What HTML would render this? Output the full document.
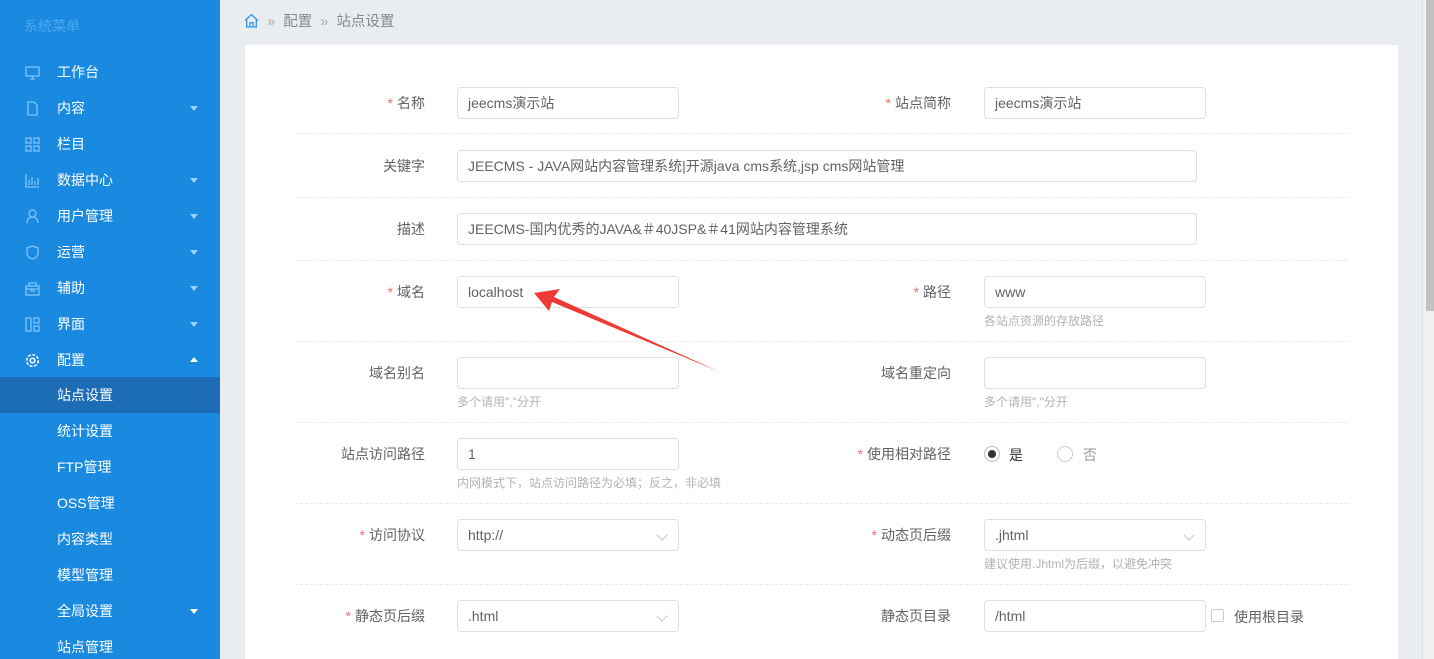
<!DOCTYPE html>
<html style="width:1434px;height:659px;overflow:hidden"><head><meta charset="utf-8">
<style>
*{box-sizing:border-box;margin:0;padding:0}
body{width:1434px;height:659px;overflow:hidden;background:#e9edf2;font-family:"Liberation Sans","Noto Sans CJK SC",sans-serif;font-size:14px;color:#606266;position:relative}
.side{position:absolute;left:0;top:0;width:220px;height:659px;background:#1a8ae0}
.side .t{position:absolute;left:24px;top:16px;color:#4aa8f0;font-size:14px}
.mi{position:absolute;left:0;width:220px;height:36px;line-height:36px;color:#fff;font-size:14px}
.mi .ic{position:absolute;left:25px;top:11px;width:15px;height:15px}
.mi .tx{position:absolute;left:57px}
.mi .ar{position:absolute;left:190px;top:16px;width:0;height:0;border-left:4px solid transparent;border-right:4px solid transparent;border-top:5px solid #9fd0f7}
.mi .up{border-top:none;border-bottom:5px solid #fff;top:15px}
.act{background:#1c6db5}
.bc{position:absolute;left:244px;top:10px;color:#888;font-size:14.5px}
.card{position:absolute;left:245px;top:45px;width:1153px;height:614px;background:#fff}
.gut{position:absolute;left:1398px;top:0;width:24px;height:659px;background:#e9edf2}
.sb{position:absolute;left:1422px;top:0;width:12px;height:659px;background:#f0f0f0;border-left:1px solid #e0e0e0}
.sb div{position:absolute;left:3px;top:0;width:9px;height:311px;background:#c1c1c1}
.hr{position:absolute;left:295px;width:1053px;border-top:1px dashed #e8e8ec}
.lb{position:absolute;text-align:right;font-size:14px;color:#606266;line-height:32px}
.lb i{color:#f56c6c;font-style:normal;margin-right:4px}
.in{position:absolute;height:32px;border:1px solid #dcdfe6;border-radius:4px;line-height:30px;padding-left:10px;color:#606266;font-size:14px;background:#fff}
.in .dd{position:absolute;right:12px;top:11px;width:8px;height:8px;border-right:1px solid #c0c4cc;border-bottom:1px solid #c0c4cc;transform:rotate(45deg)}
.hint{position:absolute;font-size:12px;color:#b0b3b8}
</style></head><body>
<div class="side">
<div class="t">系统菜单</div>
<div class="mi" style="top:54px"><svg class="ic" viewBox="0 0 15 15" fill="none" stroke="#7cc4f8" stroke-width="1.3"><rect x="1" y="2" width="13" height="9"/><path d="M7.5 11v3M5 14h5"/></svg><span class="tx">工作台</span></div>
<div class="mi" style="top:90px"><svg class="ic" viewBox="0 0 15 15" fill="none" stroke="#7cc4f8" stroke-width="1.3"><path d="M3 1h6l3 3v10H3z"/></svg><span class="tx">内容</span><span class="ar"></span></div>
<div class="mi" style="top:126px"><svg class="ic" viewBox="0 0 15 15" fill="none" stroke="#7cc4f8" stroke-width="1.3"><rect x="1" y="1" width="5" height="5"/><rect x="9" y="1" width="5" height="5"/><rect x="1" y="9" width="5" height="5"/><rect x="9" y="9" width="5" height="5"/></svg><span class="tx">栏目</span></div>
<div class="mi" style="top:162px"><svg class="ic" viewBox="0 0 15 15" fill="none" stroke="#7cc4f8" stroke-width="1.3"><path d="M1 1v13h13M4 12V7M7 12V4M10 12V8M13 12V5"/></svg><span class="tx">数据中心</span><span class="ar"></span></div>
<div class="mi" style="top:198px"><svg class="ic" viewBox="0 0 15 15" fill="none" stroke="#7cc4f8" stroke-width="1.3"><circle cx="7.5" cy="4.5" r="3.5"/><path d="M2 14c0-4 2.5-6 5.5-6s5.5 2 5.5 6"/></svg><span class="tx">用户管理</span><span class="ar"></span></div>
<div class="mi" style="top:234px"><svg class="ic" viewBox="0 0 15 15" fill="none" stroke="#7cc4f8" stroke-width="1.3"><path d="M2 3l5.5-2L13 3v5c0 3-2.5 5-5.5 6C4.5 13 2 11 2 8z"/></svg><span class="tx">运营</span><span class="ar"></span></div>
<div class="mi" style="top:270px"><svg class="ic" viewBox="0 0 15 15" fill="none" stroke="#7cc4f8" stroke-width="1.3"><rect x="1" y="5" width="13" height="9"/><path d="M4 5V2h7v3M1 8h13M6 8v2h3V8"/></svg><span class="tx">辅助</span><span class="ar"></span></div>
<div class="mi" style="top:306px"><svg class="ic" viewBox="0 0 15 15" fill="none" stroke="#7cc4f8" stroke-width="1.3"><rect x="1" y="1" width="5" height="13"/><rect x="9" y="1" width="5" height="5"/><rect x="9" y="9" width="5" height="5"/></svg><span class="tx">界面</span><span class="ar"></span></div>
<div class="mi" style="top:342px"><svg class="ic" viewBox="0 0 15 15" fill="none" stroke="#fff" stroke-width="1.5"><circle cx="7.5" cy="7.5" r="2.3"/><circle cx="7.5" cy="7.5" r="5.8" stroke-dasharray="3 1.5"/></svg><span class="tx">配置</span><span class="ar up"></span></div>
<div class="mi act" style="top:377px"><span class="tx">站点设置</span></div>
<div class="mi" style="top:413px"><span class="tx">统计设置</span></div>
<div class="mi" style="top:449px"><span class="tx">FTP管理</span></div>
<div class="mi" style="top:485px"><span class="tx">OSS管理</span></div>
<div class="mi" style="top:521px"><span class="tx">内容类型</span></div>
<div class="mi" style="top:557px"><span class="tx">模型管理</span></div>
<div class="mi" style="top:593px"><span class="tx">全局设置</span><span class="ar" style="border-top-color:#fff"></span></div>
<div class="mi" style="top:629px"><span class="tx">站点管理</span></div>
</div>

<div class="bc"><svg width="15" height="15" viewBox="0 0 14 14" fill="none" stroke="#3a9be8" stroke-width="1.3" style="vertical-align:-2px"><path d="M1 7L7 1.5 13 7M2.5 6v7h9V6M5.5 13V9h3v4"/></svg>&nbsp; <span style="color:#aaa">»</span>&nbsp; 配置 &nbsp;<span style="color:#aaa">»</span>&nbsp; 站点设置</div>
<div class="card"></div>
<div class="gut"></div>
<div class="sb"><div></div></div>

<div class="hr" style="top:133px"></div>
<div class="hr" style="top:197px"></div>
<div class="hr" style="top:260px"></div>
<div class="hr" style="top:341px"></div>
<div class="hr" style="top:422px"></div>
<div class="hr" style="top:503px"></div>
<div class="hr" style="top:584px"></div>

<div class="lb" style="right:1009px;top:87px"><i>*</i>名称</div>
<div class="in" style="left:457px;top:87px;width:222px">jeecms演示站</div>
<div class="lb" style="right:483px;top:87px"><i>*</i>站点简称</div>
<div class="in" style="left:984px;top:87px;width:222px">jeecms演示站</div>

<div class="lb" style="right:1009px;top:150px">关键字</div>
<div class="in" style="left:457px;top:150px;width:740px">JEECMS - JAVA网站内容管理系统|开源java cms系统,jsp cms网站管理</div>

<div class="lb" style="right:1009px;top:213px">描述</div>
<div class="in" style="left:457px;top:213px;width:740px">JEECMS-国内优秀的JAVA&amp;＃40JSP&amp;＃41网站内容管理系统</div>

<div class="lb" style="right:1009px;top:276px"><i>*</i>域名</div>
<div class="in" style="left:457px;top:276px;width:222px">localhost</div>
<div class="lb" style="right:483px;top:276px"><i>*</i>路径</div>
<div class="in" style="left:984px;top:276px;width:222px">www</div>
<div class="hint" style="left:984px;top:312px">各站点资源的存放路径</div>

<div class="lb" style="right:1009px;top:357px">域名别名</div>
<div class="in" style="left:457px;top:357px;width:222px"></div>
<div class="hint" style="left:457px;top:393px">多个请用","分开</div>
<div class="lb" style="right:483px;top:357px">域名重定向</div>
<div class="in" style="left:984px;top:357px;width:222px"></div>
<div class="hint" style="left:984px;top:393px">多个请用","分开</div>

<div class="lb" style="right:1009px;top:438px">站点访问路径</div>
<div class="in" style="left:457px;top:438px;width:222px">1</div>
<div class="hint" style="left:457px;top:474px">内网模式下，站点访问路径为必填；反之，非必填</div>
<div class="lb" style="right:483px;top:438px"><i>*</i>使用相对路径</div>
<div style="position:absolute;left:984px;top:446px;width:16px;height:16px;border:1px solid #bbb;border-radius:50%"><div style="position:absolute;left:3px;top:3px;width:8px;height:8px;border-radius:50%;background:#333"></div></div>
<div style="position:absolute;left:1009px;top:445px;color:#333">是</div>
<div style="position:absolute;left:1057px;top:446px;width:16px;height:16px;border:1px solid #ccc;border-radius:50%"></div>
<div style="position:absolute;left:1083px;top:445px;color:#999">否</div>

<div class="lb" style="right:1009px;top:519px"><i>*</i>访问协议</div>
<div class="in" style="left:457px;top:519px;width:222px">http://<span class="dd"></span></div>
<div class="lb" style="right:483px;top:519px"><i>*</i>动态页后缀</div>
<div class="in" style="left:984px;top:519px;width:222px">.jhtml<span class="dd"></span></div>
<div class="hint" style="left:984px;top:555px">建议使用.Jhtml为后缀，以避免冲突</div>

<div class="lb" style="right:1009px;top:600px"><i>*</i>静态页后缀</div>
<div class="in" style="left:457px;top:600px;width:222px">.html<span class="dd"></span></div>
<div class="lb" style="right:483px;top:600px">静态页目录</div>
<div class="in" style="left:984px;top:600px;width:222px">/html</div>
<div style="position:absolute;left:1211px;top:609px;width:13px;height:13px;border:1px solid #ccc;border-radius:2px"></div>
<div style="position:absolute;left:1234px;top:607px;color:#606266">使用根目录</div>

<svg style="position:absolute;left:0;top:0" width="1434" height="659"><polygon points="534,293 560,289 554,297 720,372 552,302 549,311" fill="#f03a36"/></svg>
</body></html>
